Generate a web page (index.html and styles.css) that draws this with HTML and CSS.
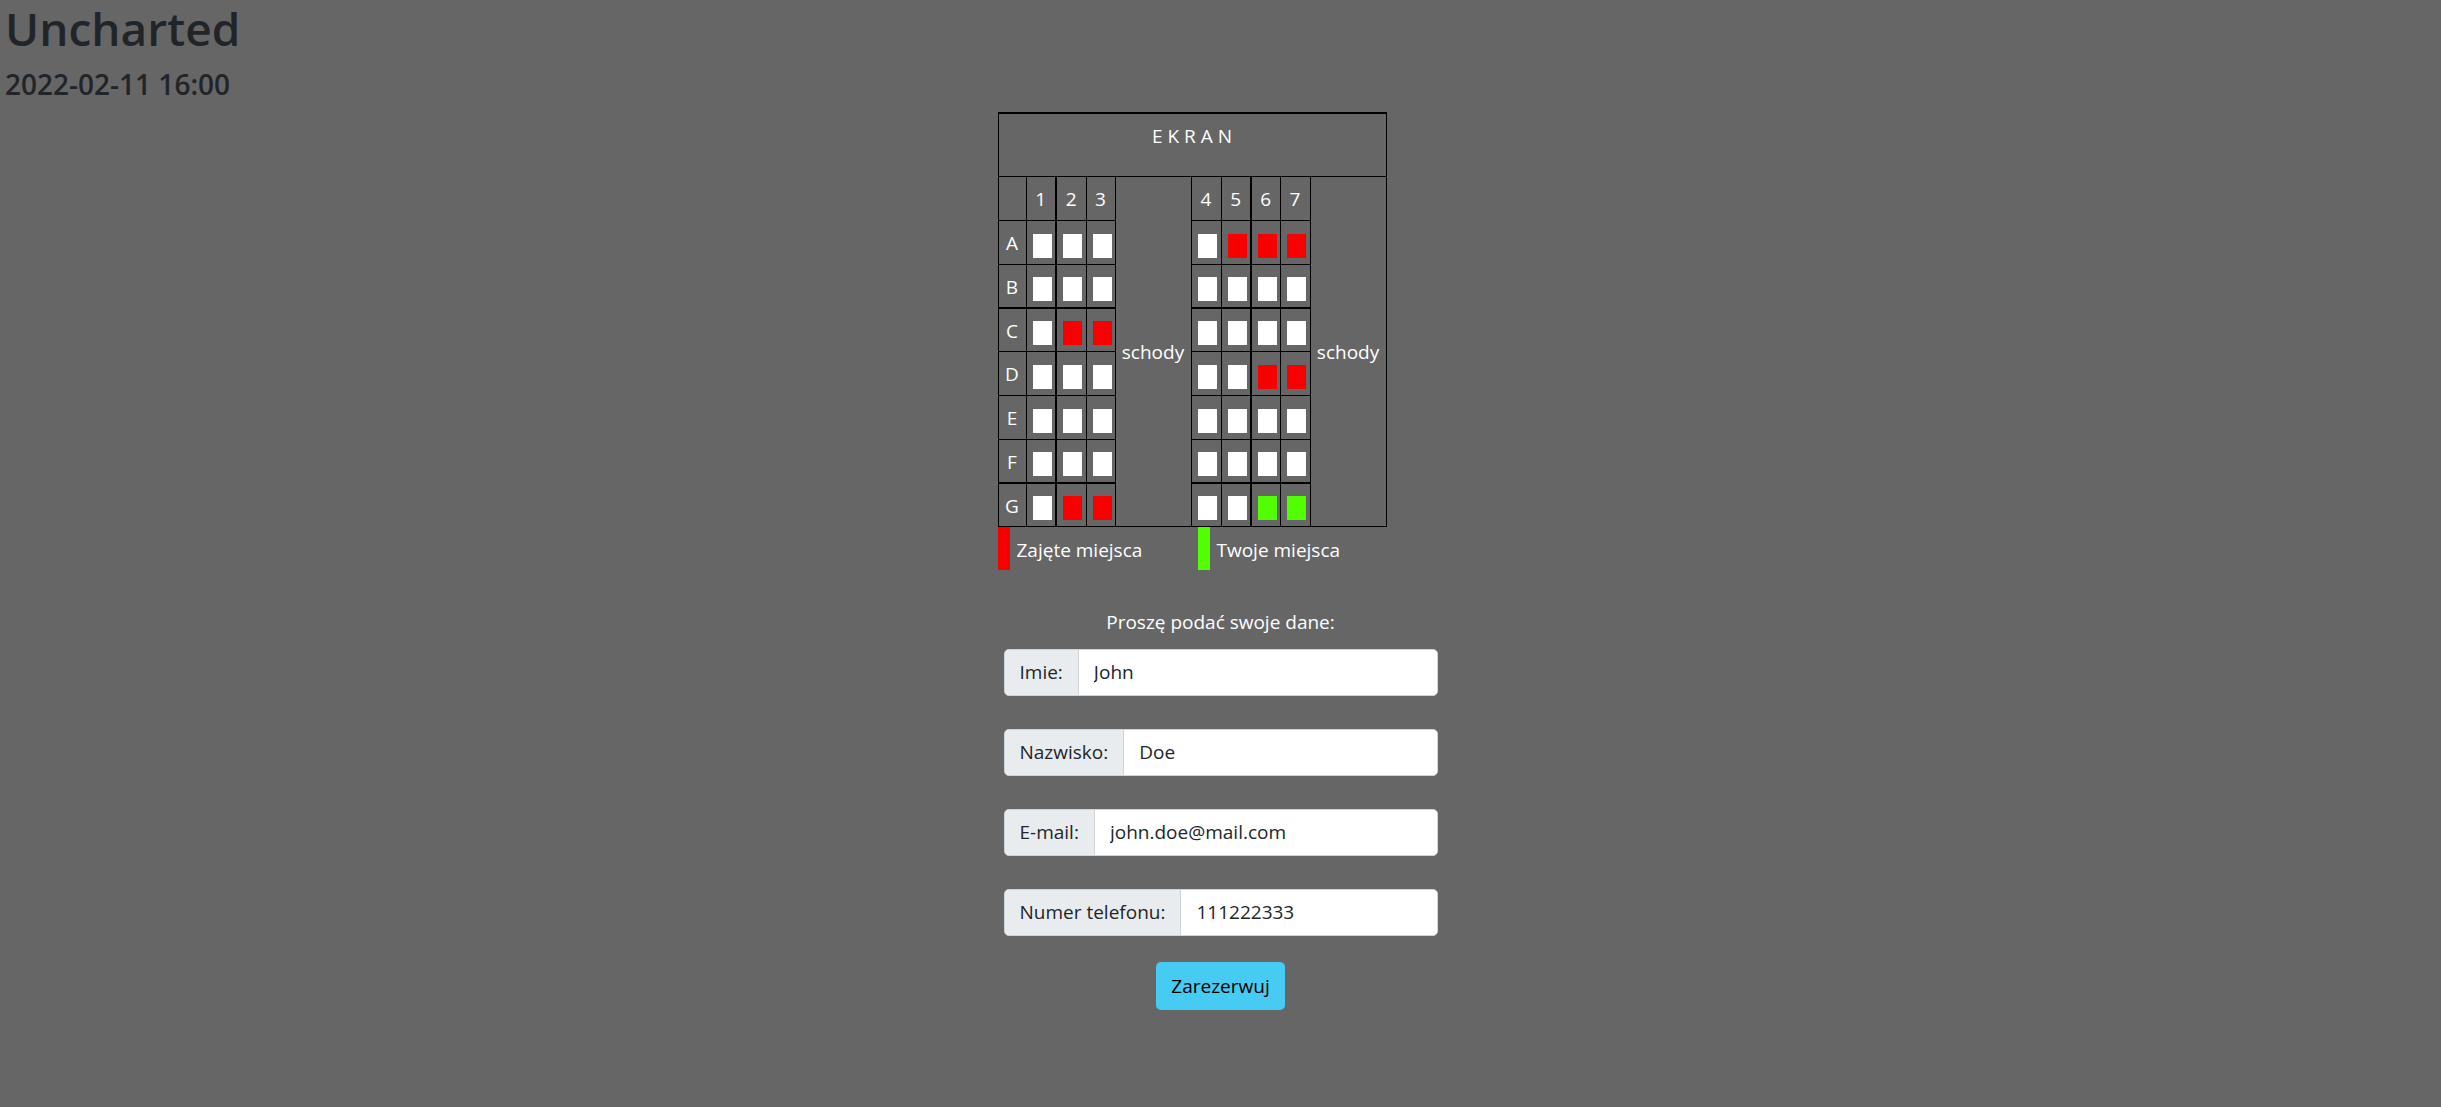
FILE: index.html
```html
<!DOCTYPE html>
<html lang="pl">
<head>
<meta charset="utf-8">
<title>Uncharted</title>
<link rel="stylesheet" href="styles.css">
</head>
<body>
<header class="show">
  <h1 class="show-title">Uncharted</h1>
  <h2 class="show-date">2022-02-11 16:00</h2>
</header>
<main class="booking">
  <table class="hall">
    <colgroup>
      <col class="col-row"><col class="col-seat"><col class="col-seat"><col class="col-narrow"><col class="col-stairs">
      <col class="col-seat"><col class="col-seat"><col class="col-narrow"><col class="col-seat"><col class="col-stairs">
    </colgroup>
    <tbody id="hall">
      <tr class="screen"><td colspan="10">E K R A N</td></tr>
      <tr class="numbers">
        <td></td><th class="thick-right">1</th><th>2</th><th>3</th>
        <td class="stairs" rowspan="8">schody</td>
        <th>4</th><th class="thick-right">5</th><th>6</th><th>7</th>
        <td class="stairs" rowspan="8">schody</td>
      </tr>
    </tbody>
  </table>
  <div class="legend">
    <div class="legend-item taken">Zajęte miejsca</div>
    <div class="legend-item yours">Twoje miejsca</div>
  </div>
  <form class="details">
    <p class="prompt">Proszę podać swoje dane:</p>
    <div class="field"><label for="first">Imie:</label><input id="first" type="text" value="John"></div>
    <div class="field"><label for="last">Nazwisko:</label><input id="last" type="text" value="Doe"></div>
    <div class="field"><label for="mail">E-mail:</label><input id="mail" type="email" value="john.doe@mail.com"></div>
    <div class="field"><label for="phone">Numer telefonu:</label><input id="phone" type="tel" value="111222333"></div>
    <button class="submit" type="submit">Zarezerwuj</button>
  </form>
</main>
<script src="hall.js"></script>
</body>
</html>
```
FILE: hall.js
```js
const taken = ["A5", "A6", "A7", "C2", "C3", "D6", "D7", "G2", "G3"];
const yours = ["G6", "G7"];
const hall = document.getElementById("hall");

for (const letter of "ABCDEFG") {
  const row = hall.insertRow();
  if (letter === "C" || letter === "G") row.className = "thick-top";
  const head = document.createElement("th");
  head.textContent = letter;
  row.append(head);
  for (let n = 1; n <= 7; n++) {
    const id = letter + n;
    const cell = row.insertCell();
    cell.className = n === 1 || n === 5 ? "seat-cell thick-right" : "seat-cell";
    const seat = document.createElement("input");
    seat.type = "checkbox";
    seat.className = "seat";
    seat.setAttribute("aria-label", id);
    seat.disabled = taken.includes(id);
    seat.checked = yours.includes(id);
    cell.append(seat);
  }
}
```
FILE: styles.css
```css
* {
  box-sizing: border-box;
}

body {
  margin: 0;
  background: #666;
  color: #fff;
  font: 19px/30px "Open Sans", "Noto Sans", sans-serif;
}

.show {
  padding: 0 5px;
  color: #212529;
}

.show-title,
.show-date {
  margin: 0;
  font-weight: 600;
}

.show-title {
  margin-bottom: 10px;
  font-size: 46px;
  line-height: 56px;
}

.show-date {
  margin-bottom: 10px;
  font-size: 28px;
  line-height: 36px;
}

.booking {
  width: 446px;
  max-width: 100%;
  margin: 0 auto;
}

.hall {
  width: 388px;
  table-layout: fixed;
  border-collapse: collapse;
  border-top: 2px solid #000;
  text-align: center;
}

.col-row {
  width: 28px;
}

.col-seat {
  width: 30px;
}

.col-narrow {
  width: 29px;
}

.col-stairs {
  width: 76px;
}

.hall td,
.hall th {
  height: 44px;
  padding: 2px 0 0;
  border: 1px solid #000;
  font-weight: 400;
}

.hall .screen td {
  height: 63px;
  padding-top: 7px;
  border-top-width: 2px;
  vertical-align: top;
}

.hall .thick-right {
  border-right-width: 2px;
}

.hall .thick-top td,
.hall .thick-top th {
  height: 43px;
  border-top-width: 2px;
}

.hall .seat-cell {
  padding: 0 0 6px 3px;
  vertical-align: bottom;
}

.seat {
  display: block;
  appearance: none;
  width: 19px;
  height: 24px;
  margin: 0 auto;
  background: #fff;
}

.seat:disabled {
  background: #f60000;
}

.seat:checked {
  background: #52ff00;
}

.legend {
  display: flex;
}

.legend-item {
  width: 200px;
  padding: 8px 0 5px 7px;
  border-left: 12px solid;
}

.taken {
  border-left-color: #f60000;
}

.yours {
  border-left-color: #52ff00;
}

.details {
  padding: 37px 6px 0;
}

.prompt {
  margin: 0 0 12px;
  text-align: center;
}

.field {
  display: flex;
  height: 47px;
  margin-bottom: 33px;
  overflow: hidden;
  border: 1px solid #ced4da;
  border-radius: 5px;
  background: #fff;
  color: #212529;
}

.field label {
  padding: 7px 15px;
  border-right: 1px solid #ced4da;
  background: #e9ecef;
  white-space: nowrap;
}

.field input {
  flex: 1;
  min-width: 0;
  padding: 0 15px;
  border: 0;
  background: #fff;
  color: #212529;
  font: inherit;
}

.submit {
  display: block;
  height: 48px;
  margin: -7px auto 0;
  padding: 0 15px;
  border: 0;
  border-radius: 5px;
  background: #48cbf3;
  color: #000;
  font: inherit;
}
```
